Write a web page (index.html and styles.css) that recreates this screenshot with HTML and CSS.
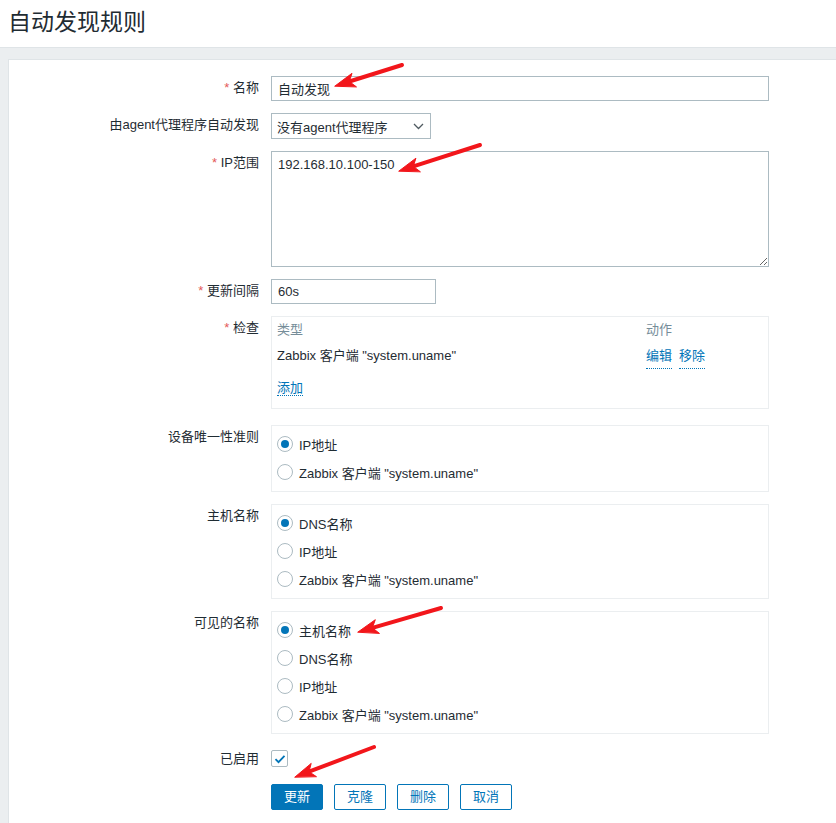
FILE: index.html
```html
<!DOCTYPE html>
<html lang="zh-CN">
<head>
<meta charset="utf-8">
<title>自动发现规则</title>
<link rel="stylesheet" href="styles.css">
</head>
<body>
<header class="page-header"><h1 class="page-title">自动发现规则</h1></header>
<main class="content">
  <div class="panel">
    <form class="form">
      <div class="row">
        <label class="lbl"><span class="req">*</span> 名称</label>
        <div class="field"><input class="text wide" type="text" value="自动发现"></div>
      </div>
      <div class="row">
        <label class="lbl">由agent代理程序自动发现</label>
        <div class="field">
          <div class="select"><span>没有agent代理程序</span>
            <svg class="chev" width="11" height="7" viewBox="0 0 11 7"><path d="M1 1l4.5 4.5L10 1" fill="none" stroke="#4f5a60" stroke-width="1.3"/></svg>
          </div>
        </div>
      </div>
      <div class="row">
        <label class="lbl"><span class="req">*</span> IP范围</label>
        <div class="field"><textarea class="area">192.168.10.100-150</textarea></div>
      </div>
      <div class="row">
        <label class="lbl"><span class="req">*</span> 更新间隔</label>
        <div class="field"><input class="text short" type="text" value="60s"></div>
      </div>
      <div class="row">
        <label class="lbl"><span class="req">*</span> 检查</label>
        <div class="field">
          <div class="box checks">
            <div class="chk-row head"><span>类型</span><span>动作</span></div>
            <div class="chk-row"><span>Zabbix 客户端 "system.uname"</span><span class="actions"><a class="link">编辑</a><a class="link">移除</a></span></div>
            <div class="chk-add"><a class="link">添加</a></div>
          </div>
        </div>
      </div>
      <div class="row gap-lg">
        <label class="lbl">设备唯一性准则</label>
        <div class="field">
          <div class="box radios">
            <div class="radio"><span class="dot on"></span>IP地址</div>
            <div class="radio"><span class="dot"></span>Zabbix 客户端 "system.uname"</div>
          </div>
        </div>
      </div>
      <div class="row">
        <label class="lbl">主机名称</label>
        <div class="field">
          <div class="box radios">
            <div class="radio"><span class="dot on"></span>DNS名称</div>
            <div class="radio"><span class="dot"></span>IP地址</div>
            <div class="radio"><span class="dot"></span>Zabbix 客户端 "system.uname"</div>
          </div>
        </div>
      </div>
      <div class="row">
        <label class="lbl">可见的名称</label>
        <div class="field">
          <div class="box radios">
            <div class="radio"><span class="dot on"></span>主机名称</div>
            <div class="radio"><span class="dot"></span>DNS名称</div>
            <div class="radio"><span class="dot"></span>IP地址</div>
            <div class="radio"><span class="dot"></span>Zabbix 客户端 "system.uname"</div>
          </div>
        </div>
      </div>
      <div class="row enabled">
        <label class="lbl lbl-cb">已启用</label>
        <div class="field">
          <span class="checkbox"><svg width="12" height="10" viewBox="0 0 12 10"><path d="M1.5 5.2l3 3L10.5 1.8" fill="none" stroke="#0275b8" stroke-width="1.8"/></svg></span>
        </div>
      </div>
      <div class="row buttons">
        <div class="lbl"></div>
        <div class="field btns">
          <button type="button" class="btn primary">更新</button>
          <button type="button" class="btn">克隆</button>
          <button type="button" class="btn">删除</button>
          <button type="button" class="btn">取消</button>
        </div>
      </div>
    </form>
  </div>
</main>
<svg class="arrows" width="836" height="823" viewBox="0 0 836 823">
  <g fill="#f2161b" stroke="#f2161b" stroke-linecap="round">
    <line x1="402" y1="65" x2="349.3" y2="81.5" stroke-width="4"/>
    <polygon points="335,86 352,73.3 349.3,81.5 356.2,86.7" stroke-width="1" stroke-linejoin="round"/>
    <line x1="480" y1="145" x2="413.3" y2="166.4" stroke-width="4"/>
    <polygon points="399,171 415.9,158.2 413.3,166.4 420.1,171.6" stroke-width="1" stroke-linejoin="round"/>
    <line x1="441" y1="608" x2="372.4" y2="627.8" stroke-width="4"/>
    <polygon points="358,632 375.3,619.7 372.4,627.8 379.2,633.2" stroke-width="1" stroke-linejoin="round"/>
    <line x1="374" y1="747" x2="309" y2="771.7" stroke-width="4"/>
    <polygon points="295,777 311.2,763.4 309,771.7 316.2,776.5" stroke-width="1" stroke-linejoin="round"/>
  </g>
</svg>
</body>
</html>
```
FILE: styles.css
```css
* { box-sizing: border-box; }
html, body { margin: 0; padding: 0; }
body {
  font-family: "Liberation Sans", "Noto Sans CJK SC", sans-serif;
  font-size: 13px;
  color: #1f2c33;
  background: #ebeef0;
  overflow: hidden;
  height: 823px;
  position: relative;
}
.page-header {
  height: 48px;
  background: #fff;
  border-bottom: 1px solid #dfe4e7;
  display: flex;
  align-items: center;
  padding-left: 8px;
}
.page-title {
  margin: 0;
  font-size: 23px;
  font-weight: normal;
  color: #1f2c33;
  line-height: 1;
  padding-bottom: 2px;
}
.content { padding: 11px 0 0 8px; }
.panel {
  background: #fff;
  border: 1px solid #dfe4e7;
  width: 860px;
  height: 800px;
  padding-top: 16px;
}
.form { display: flex; flex-direction: column; }
.row { display: flex; align-items: flex-start; margin-bottom: 12px; }
.row.gap-lg { margin-top: 4px; }
.row.enabled { margin-top: 4px; }
.row.buttons { margin-top: 5px; }
.lbl {
  width: 262px;
  padding-right: 12px;
  text-align: right;
  line-height: 24px;
  flex: none;
}
.lbl-cb { line-height: 17px; }
.req { color: #e45959; }
.field { width: 498px; flex: none; }
.text {
  display: block;
  height: 25px;
  border: 1px solid #acbbc2;
  padding: 0 6px;
  font: inherit;
  color: #1f2c33;
  outline: none;
  border-radius: 0;
}
.text.wide { width: 498px; }
.text.short { width: 165px; }
.select {
  width: 160px;
  height: 26px;
  border: 1px solid #acbbc2;
  display: flex;
  align-items: center;
  justify-content: space-between;
  padding: 0 6px 0 5px;
}
.chev { margin-top: 1px; }
.area {
  display: block;
  width: 498px;
  height: 116px;
  border: 1px solid #acbbc2;
  padding: 5px 6px;
  font: inherit;
  color: #1f2c33;
  outline: none;
  resize: both;
  border-radius: 0;
}
.box { border: 1px solid #ebeef0; }
.checks { padding: 1px 5px 8px; }
.chk-row {
  display: grid;
  grid-template-columns: 369px auto;
  line-height: 24px;
  margin-bottom: 2px;
}
.chk-row.head { color: #768d99; }
.chk-add { line-height: 24px; margin-top: 7px; }
.actions { display: flex; gap: 7px; }
.link {
  color: #0275b8;
  text-decoration: none;
  border-bottom: 1px dotted #0275b8;
}
.radios { padding: 4px 5px 5px; }
.radio {
  height: 28px;
  display: flex;
  align-items: center;
  gap: 6px;
}
.dot {
  width: 16px;
  height: 16px;
  border: 1px solid #acbbc2;
  border-radius: 50%;
  display: flex;
  align-items: center;
  justify-content: center;
  flex: none;
}
.dot.on::after {
  content: "";
  width: 8px;
  height: 8px;
  border-radius: 50%;
  background: #0275b8;
}
.checkbox {
  width: 17px;
  height: 17px;
  border: 1px solid #acbbc2;
  border-radius: 2px;
  display: flex;
  align-items: center;
  justify-content: center;
}
.btns { display: flex; gap: 11px; }
.btn {
  height: 26px;
  padding: 0 12px;
  border: 1px solid #0275b8;
  border-radius: 2px;
  background: #fff;
  color: #0275b8;
  font: inherit;
  line-height: 24px;
}
.btn.primary { background: #0275b8; color: #fff; }
.arrows { position: absolute; left: 0; top: 0; pointer-events: none; }
```
